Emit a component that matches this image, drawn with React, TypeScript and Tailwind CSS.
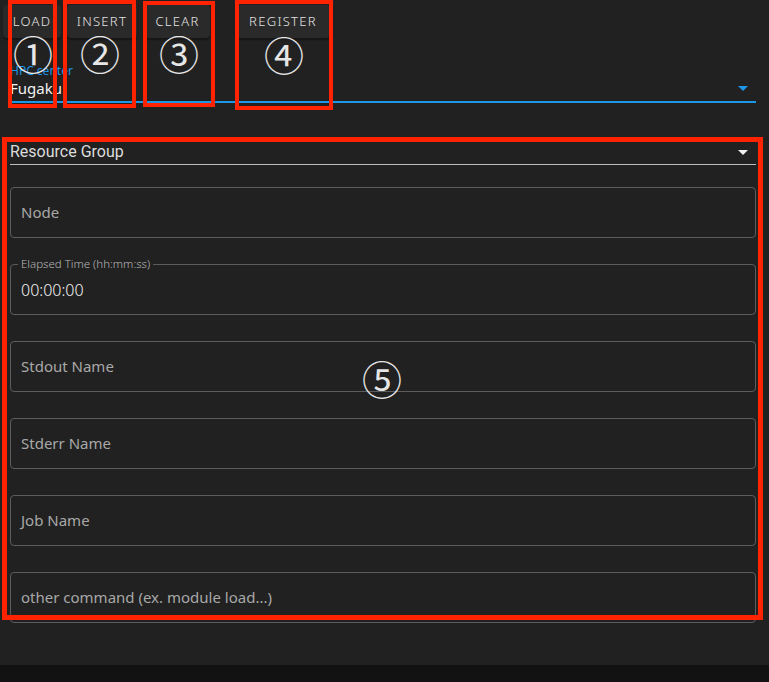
import { ReactNode } from "react";

const fields = ["Stdout Name", "Stderr Name", "Job Name", "other command (ex. module load...)"];

function Caret({ color }: { color: string }) {
  return (
    <svg width="10" height="5" viewBox="0 0 10 5" className="mr-[8px]">
      <path d="M0 0 L10 0 L5 5 Z" fill={color} />
    </svg>
  );
}

function Btn({ children, className }: { children: ReactNode; className: string }) {
  return (
    <button
      className={`h-[33px] rounded-[4px] bg-[#2a2a2a] text-[13px] font-light tracking-[0.1em] text-[#e4e4e4] shadow-[0_2px_2px_rgba(0,0,0,0.35)] ${className}`}
    >
      {children}
    </button>
  );
}

function Field({ label }: { label: string }) {
  return (
    <div className="flex h-[51px] items-center rounded-[4px] border border-[#5c5c5c] px-[10px] text-[15px] text-[#a8a8a8]">
      {label}
    </div>
  );
}

export default function App() {
  return (
    <div
      className="relative min-h-[682px] bg-[#121212]"
      style={{ fontFamily: '"Noto Sans", "Noto Sans CJK JP", sans-serif' }}
    >
      <div className="h-[665px] bg-[#212121]">
        {/* action buttons */}
        <div className="flex pt-[5px]">
          <Btn className="ml-[3px] w-[58px]">LOAD</Btn>
          <Btn className="ml-[6px] w-[70px]">INSERT</Btn>
          <Btn className="ml-[8px] w-[65px]">CLEAR</Btn>
          <Btn className="ml-[26px] w-[94px]">REGISTER</Btn>
        </div>

        <div className="ml-[10px] mr-[13px]">
          {/* HPC center */}
          <div className="mt-[25px] border-b-2 border-[#1e96e8] pb-[4px]">
            <div className="h-[16px] text-[12px] leading-[16px] text-[#1e96e8]">HPC center</div>
            <div className="flex h-[18px] items-center justify-between text-[15px] text-[#f2f2f2]">
              <span>Fugaku</span>
              <Caret color="#1e96e8" />
            </div>
          </div>

          {/* Resource Group */}
          <div className="mt-[39px] flex h-[20px] items-center justify-between text-[16px] text-[#dcdcdc]">
            <span style={{ fontFamily: "Roboto, sans-serif" }}>Resource Group</span>
            <Caret color="#f0f0f0" />
          </div>
          <div className="mt-[2px] h-px bg-[#bdbdbd]" />

          <div className="mt-[22px] flex flex-col gap-[26px]">
            <Field label="Node" />
            <div className="relative flex h-[51px] items-center rounded-[4px] border border-[#5c5c5c] px-[10px] text-[16px] font-light text-[#f0f0f0]">
              <span className="absolute left-[7px] top-[-9px] bg-[#212121] px-[3px] text-[11.5px] leading-[16px] text-[#b8b8b8]">
                Elapsed Time (hh:mm:ss)
              </span>
              00:00:00
            </div>
            {fields.map((f) => (
              <Field key={f} label={f} />
            ))}
          </div>
        </div>
      </div>

      {/* annotation boxes */}
      <div className="absolute left-[8px] top-0 h-[108px] w-[49px] border-4 border-[#ff2300]" />
      <div className="absolute left-[63px] top-0 h-[108px] w-[73px] border-4 border-[#ff2300]" />
      <div className="absolute left-[143px] top-px h-[106px] w-[72px] border-4 border-[#ff2300]" />
      <div className="absolute left-[235px] top-0 h-[110px] w-[98px] border-4 border-[#ff2300]" />
      <div className="absolute left-[2px] top-[137px] h-[483px] w-[761px] border-[5px] border-[#ff2300]" />

      {/* numbers */}
      {[
        ["①", "left-[33px] top-[53px]"],
        ["②", "left-[100px] top-[53px]"],
        ["③", "left-[179px] top-[53px]"],
        ["④", "left-[284px] top-[54px]"],
        ["⑤", "left-[382px] top-[378px]"],
      ].map(([n, pos]) => (
        <span
          key={n}
          className={`absolute ${pos} -translate-x-1/2 -translate-y-1/2 text-[40px] leading-none text-[#e6e6e6]`}
          style={{ fontFamily: '"Noto Sans CJK JP", sans-serif' }}
        >
          {n}
        </span>
      ))}
    </div>
  );
}
